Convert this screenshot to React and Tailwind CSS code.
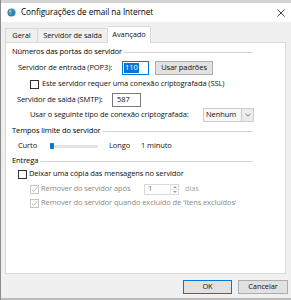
import React from 'react';

const Check = ({ checked, disabled }) => (
    <div
        className={`w-[9px] h-[9px] shrink-0 border flex items-center justify-center bg-white ${
            disabled ? 'border-[#c6c6c6]' : 'border-[#333333]'
        }`}
    >
        {checked && (
            <svg width="7" height="7" viewBox="0 0 7 7">
                <path d="M0.8 3.6 L2.7 5.4 L6.2 1.2" fill="none" stroke={disabled ? '#b5b5b5' : '#222'} strokeWidth="1" />
            </svg>
        )}
    </div>
);

const GroupHeader = ({ label, h }) => (
    <div className={`flex items-center pl-[6px] ${h}`}>
        <span className="text-black">{label}</span>
        <div className="flex-1 h-px bg-[#d5d5d5] ml-[2px] mr-[32px]" />
    </div>
);

const App = () => {
    return (
        <div className="w-[291px] h-[300px] bg-[#f0f0f0] border-l border-[#8c8c8c] flex flex-col overflow-hidden font-['Open_Sans',sans-serif] text-[7.5px] tracking-[-0.1px] leading-none whitespace-nowrap text-[#111]">
            {/* strip left from window behind */}
            <div className="h-[3px] bg-[#d4d4d4] shrink-0" />

            {/* title bar */}
            <div className="h-[19px] bg-white flex items-center shrink-0">
                <svg width="9" height="9" viewBox="0 0 10 10" className="ml-[6px]">
                    <circle cx="5" cy="5" r="4.5" fill="#2f7fc8" />
                    <path d="M2 3.5 Q4 2 5 4 Q6 6 4 8 Q2.5 7 2 5 Z" fill="#6fb64a" />
                    <path d="M6 1.2 Q8 2 8.5 4 Q7 4 6.5 2.8 Z" fill="#6fb64a" />
                    <circle cx="3.5" cy="3" r="1.5" fill="#ffffff" opacity="0.35" />
                </svg>
                <span className="ml-[5px] text-[8.2px] tracking-[-0.05px] text-black">Configurações de email na Internet</span>
                <svg width="8" height="8" viewBox="0 0 8 8" className="ml-auto mr-[6px]">
                    <path d="M0.5 0.5 L7.5 7.5 M7.5 0.5 L0.5 7.5" stroke="#333" strokeWidth="0.9" />
                </svg>
            </div>

            {/* tabs */}
            <div className="flex items-end h-[20px] pl-[4px] shrink-0">
                <div className="w-[33px] h-[14px] flex items-center justify-center border border-b-0 border-[#d9d9d9] bg-[#f0f0f0]">
                    Geral
                </div>
                <div className="w-[70px] h-[14px] flex items-center justify-center border border-l-0 border-b-0 border-[#d9d9d9] bg-[#f0f0f0]">
                    Servidor de saída
                </div>
                <div className="w-[43px] h-[17px] flex items-center justify-center border border-l-0 border-b-0 border-[#d9d9d9] bg-white -mb-px relative z-10">
                    Avançado
                </div>
            </div>

            {/* panel */}
            <div className="ml-[4px] w-[281px] h-[232px] bg-white border border-[#d9d9d9] flex flex-col shrink-0">
                <GroupHeader label="Números das portas do servidor" h="h-[18px]" />

                <div className="flex items-center h-[14px] pl-[12px]">
                    <span className="w-[104px] shrink-0">Servidor de entrada (POP3):</span>
                    <div className="w-[27px] h-[14px] border border-[#0078d7] flex items-center pl-[1px]">
                        <span className="bg-[#0078d7] text-white px-[1px] h-[10px] flex items-center">110</span>
                    </div>
                    <div className="ml-[6px] w-[58px] h-[14px] bg-[#e1e1e1] border border-[#adadad] flex items-center justify-center">
                        Usar padrões
                    </div>
                </div>

                <div className="flex items-center h-[18px] pl-[24px]">
                    <Check />
                    <span className="ml-[3px]">Este servidor requer uma conexão criptografada (SSL)</span>
                </div>

                <div className="flex items-center h-[14px] pl-[11px]">
                    <span className="w-[95px] shrink-0">Servidor de saída (SMTP):</span>
                    <div className="w-[29px] h-[14px] border border-[#7a7a7a] flex items-center pl-[4px]">587</div>
                </div>

                <div className="flex items-center h-[16px] pl-[24px]">
                    <span className="w-[173px] shrink-0">Usar o seguinte tipo de conexão criptografada:</span>
                    <div className="w-[51px] h-[14px] border border-[#cccccc] bg-[#f7f7f7] flex items-center">
                        <span className="flex-1 pl-[2px]">Nenhum</span>
                        <div className="w-[12px] h-full border-l border-[#cccccc] bg-[#ececec] flex items-center justify-center">
                            <svg width="6" height="4" viewBox="0 0 6 4">
                                <path d="M0.5 0.8 L3 3.2 L5.5 0.8" fill="none" stroke="#666" strokeWidth="0.8" />
                            </svg>
                        </div>
                    </div>
                </div>

                <GroupHeader label="Tempos limite do servidor" h="h-[16px]" />

                <div className="flex items-center h-[14px] pl-[12px]">
                    <span className="w-[32px] shrink-0">Curto</span>
                    <div className="w-[48px] h-[6px] flex items-center">
                        <div className="w-[4px] h-[6px] rounded-[1px] bg-[#0078d7]" />
                        <div className="flex-1 h-[3px] bg-[#e3e3e3]" />
                    </div>
                    <span className="ml-[11px] w-[32px] shrink-0">Longo</span>
                    <span>1 minuto</span>
                </div>

                <GroupHeader label="Entrega" h="h-[16px]" />

                <div className="flex items-center h-[10px] pl-[12px]">
                    <Check />
                    <span className="ml-[2px]">Deixar uma cópia das mensagens no servidor</span>
                </div>

                <div className="flex items-center h-[20px] pl-[24px] text-[#8a8a8a]">
                    <Check checked disabled />
                    <span className="ml-[2px] w-[103px] shrink-0">Remover do servidor após</span>
                    <div className="w-[35px] h-[11px] border border-[#d9d9d9] flex items-center">
                        <span className="flex-1 pl-[3px] text-[#6d6d6d]">1</span>
                        <div className="w-[8px] h-full flex flex-col border-l border-[#e3e3e3]">
                            <div className="flex-1 flex items-center justify-center border-b border-[#e3e3e3]">
                                <svg width="4" height="2" viewBox="0 0 4 2"><path d="M0 2 L2 0 L4 2 Z" fill="#9a9a9a" /></svg>
                            </div>
                            <div className="flex-1 flex items-center justify-center">
                                <svg width="4" height="2" viewBox="0 0 4 2"><path d="M0 0 L2 2 L4 0 Z" fill="#9a9a9a" /></svg>
                            </div>
                        </div>
                    </div>
                    <span className="ml-[6px] text-[#a8a8a8]">dias</span>
                </div>

                <div className="flex items-center h-[8px] pl-[24px] text-[#8a8a8a]">
                    <Check checked disabled />
                    <span className="ml-[2px]">Remover do servidor quando excluído de 'Itens excluídos'</span>
                </div>
            </div>

            {/* footer buttons */}
            <div className="flex justify-end gap-[6px] pr-[3px] mt-[6px] shrink-0">
                <div className="w-[49px] h-[14px] bg-[#e1e1e1] border border-[#0078d7] flex items-center justify-center">
                    OK
                </div>
                <div className="w-[50px] h-[14px] bg-[#e1e1e1] border border-[#adadad] flex items-center justify-center">
                    Cancelar
                </div>
            </div>

            <div className="mt-auto h-[2px] bg-[#bcbcbc] shrink-0" />
        </div>
    );
};

export default App;
